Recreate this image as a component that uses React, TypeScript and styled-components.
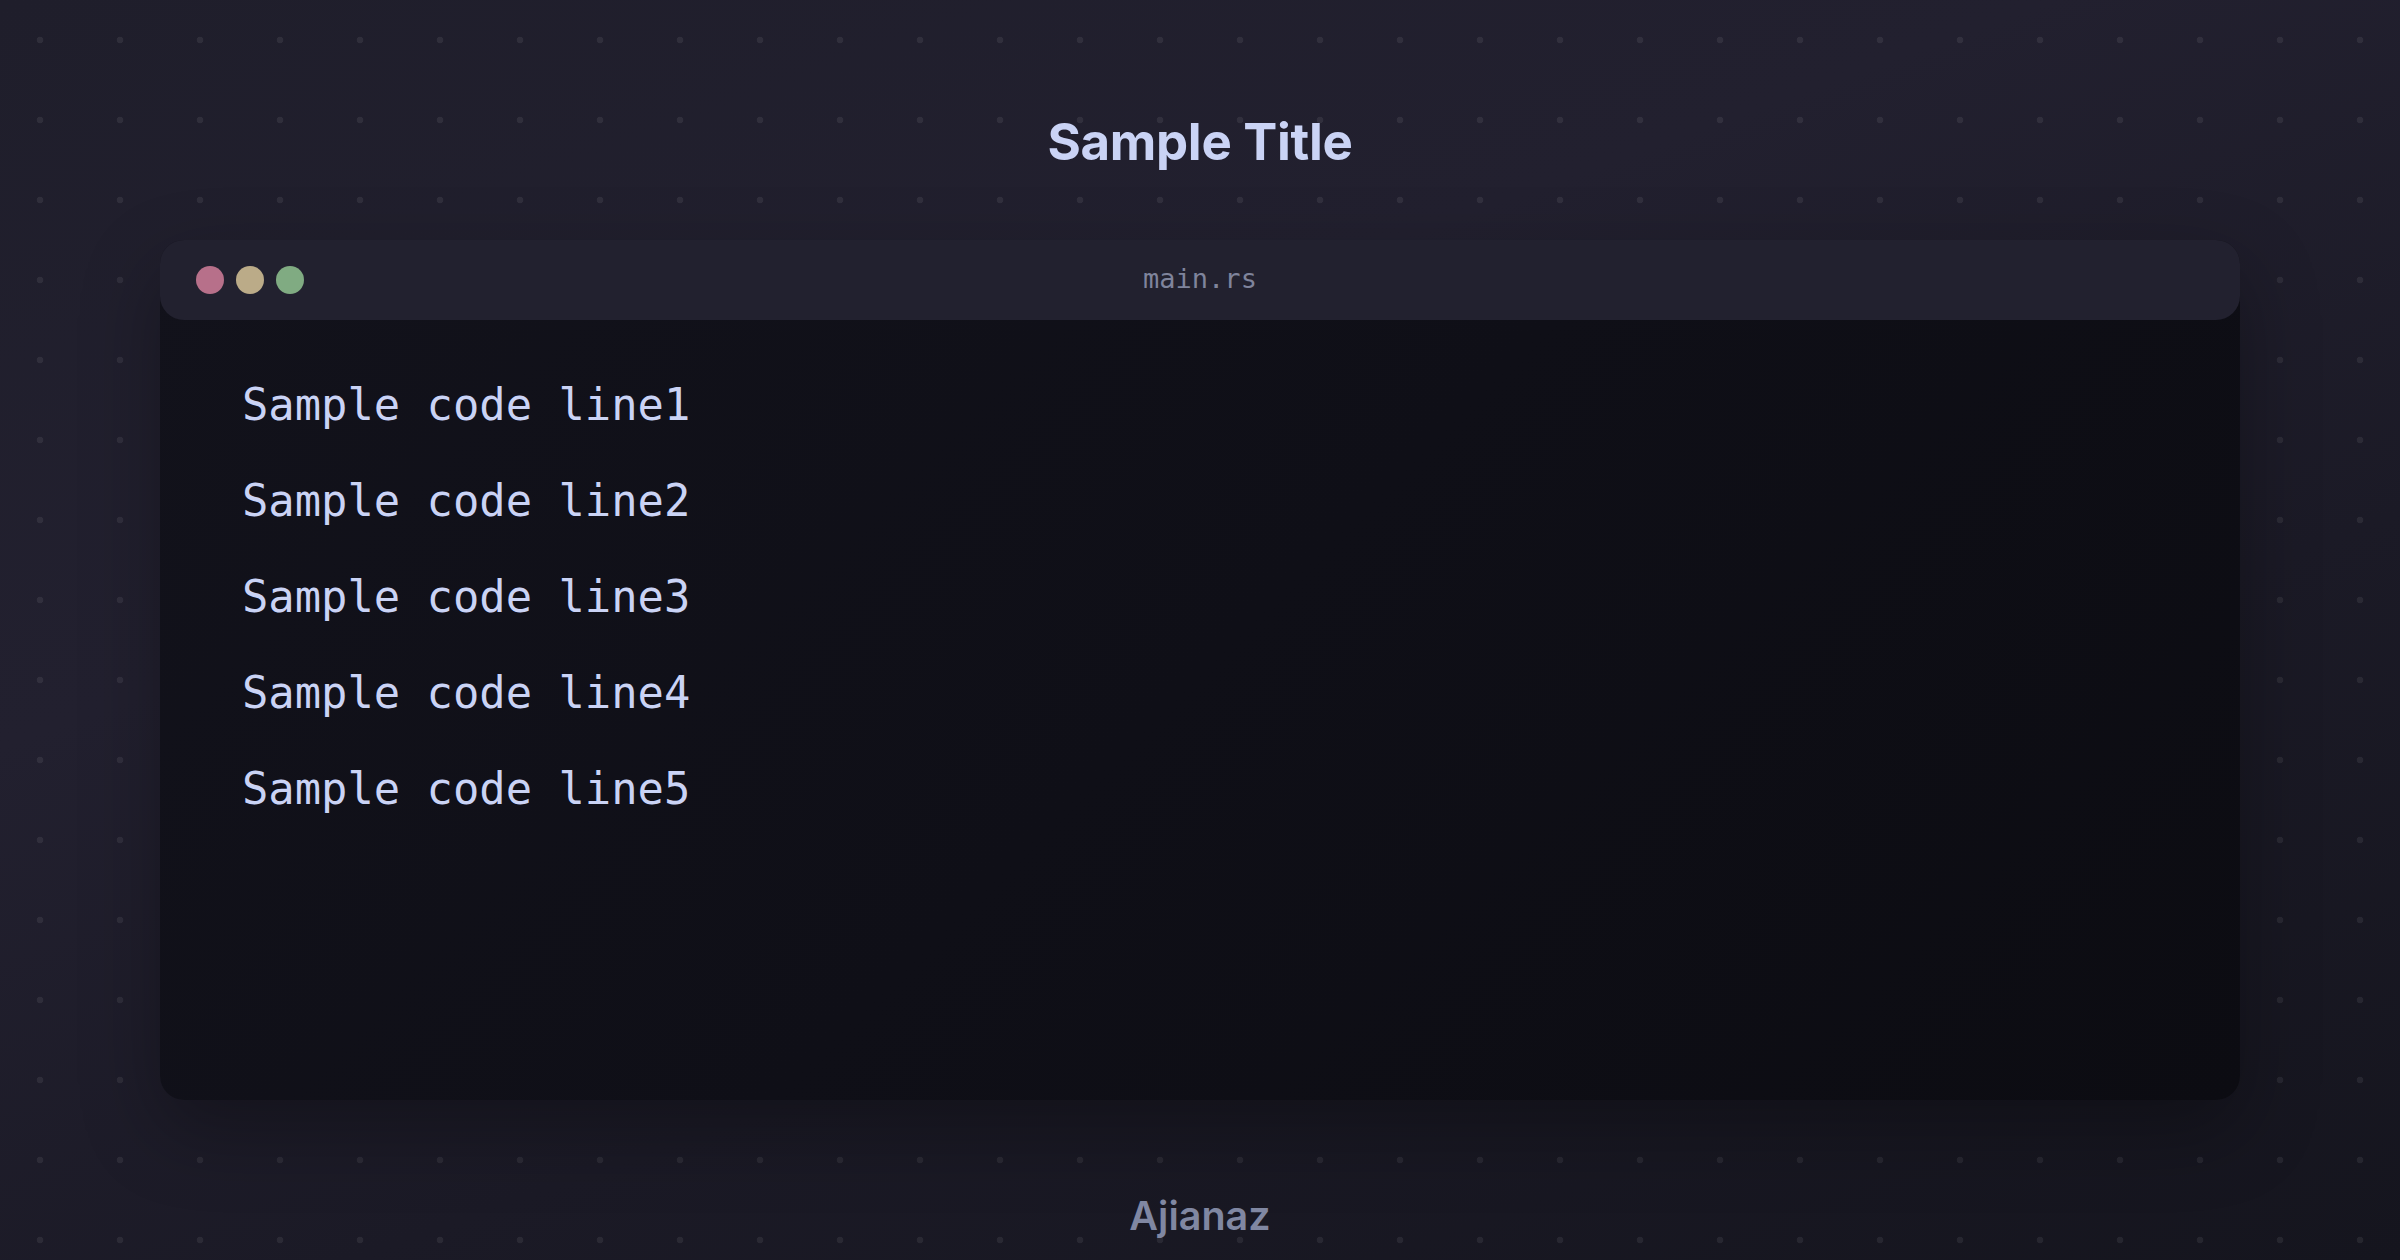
import React from "react";
import styled, { createGlobalStyle } from "styled-components";

const Global = createGlobalStyle`
  html, body {
    margin: 0;
    padding: 0;
    width: 100%;
    height: 100%;
  }
  body {
    background-color: #1a1a25;
    background-image:
      radial-gradient(circle at 40px 40px, rgba(255,255,255,0.07) 0, rgba(255,255,255,0.07) 3px, transparent 3.6px),
      linear-gradient(160deg, #1f1e2b 0%, #22202f 35%, #1b1a26 65%, #15151e 100%);
    background-size: 80px 80px, 100% 100%;
    font-family: Inter, "Liberation Sans", sans-serif;
  }
`;

const Page = styled.div`
  width: 2400px;
  height: 1260px;
  box-sizing: border-box;
  padding: 0 160px;
  display: flex;
  flex-direction: column;
  align-items: stretch;
  overflow: hidden;
`;

const Title = styled.h1`
  margin: 110px 0 66px;
  height: 64px;
  line-height: 64px;
  text-align: center;
  font-family: Inter, "Liberation Sans", sans-serif;
  font-weight: 700;
  font-size: 51px;
  letter-spacing: -0.3px;
  color: #cad3f5;
`;

const Window = styled.div`
  height: 860px;
  border-radius: 24px;
  background: linear-gradient(135deg, #12121b 0%, #0f0f17 50%, #0c0c12 100%);
  box-shadow: 0 30px 80px rgba(0, 0, 0, 0.3);
  display: flex;
  flex-direction: column;
`;

const Header = styled.div`
  height: 80px;
  border-radius: 24px;
  background: #22212f;
  display: flex;
  align-items: center;
  padding: 0 36px;
  position: relative;
`;

const Dots = styled.div`
  display: flex;
  gap: 12px;
`;

const Dot = styled.span<{ $c: string }>`
  width: 28px;
  height: 28px;
  border-radius: 50%;
  background: ${(p) => p.$c};
`;

const FileName = styled.div`
  position: absolute;
  left: 0;
  right: 0;
  top: 0;
  bottom: 4px;
  display: flex;
  align-items: center;
  justify-content: center;
  font-family: "DejaVu Sans Mono", "Liberation Mono", monospace;
  font-size: 27px;
  color: #7f849c;
  pointer-events: none;
`;

const Code = styled.div`
  padding: 37px 82px;
  display: flex;
  flex-direction: column;
`;

const CodeLine = styled.div`
  height: 96px;
  line-height: 96px;
  font-family: "DejaVu Sans Mono", "Liberation Mono", monospace;
  font-size: 43.8px;
  color: #cad3f5;
  white-space: pre;
`;

const Footer = styled.div`
  margin-top: 92px;
  height: 48px;
  line-height: 48px;
  text-align: center;
  font-family: Inter, "Liberation Sans", sans-serif;
  font-weight: 600;
  font-size: 39.5px;
  color: #8087a2;
`;

const lines = [
  "Sample code line1",
  "Sample code line2",
  "Sample code line3",
  "Sample code line4",
  "Sample code line5",
];

export default function App() {
  return (
    <>
      <Global />
      <Page>
        <Title>Sample Title</Title>
        <Window>
          <Header>
            <Dots>
              <Dot $c="#b7708a" />
              <Dot $c="#bbab88" />
              <Dot $c="#80ab82" />
            </Dots>
            <FileName>main.rs</FileName>
          </Header>
          <Code>
            {lines.map((l) => (
              <CodeLine key={l}>{l}</CodeLine>
            ))}
          </Code>
        </Window>
        <Footer>Ajianaz</Footer>
      </Page>
    </>
  );
}
